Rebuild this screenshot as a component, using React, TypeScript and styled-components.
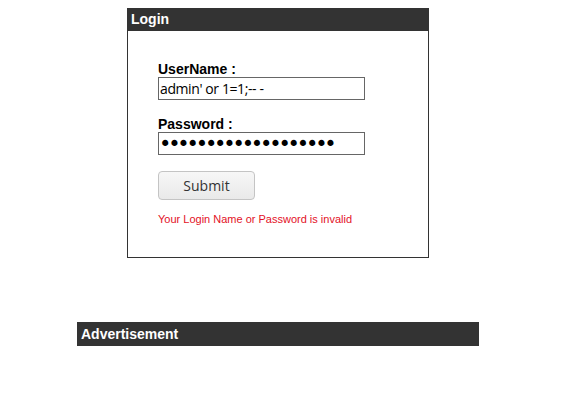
import { FC } from 'react';
import styled, { createGlobalStyle } from 'styled-components';

const GlobalStyle = createGlobalStyle`
  body {
    margin: 0;
    background: #ffffff;
    font-family: 'Liberation Sans', Arial, sans-serif;
  }
`;

const Page = styled.div`
  display: flex;
  flex-direction: column;
  padding-top: 8px;
`;

const Panel = styled.section<{ $left: number; $width: number }>`
  margin-left: ${(p) => p.$left}px;
  width: ${(p) => p.$width}px;
`;

const LoginPanel = styled(Panel)`
  border: 1px solid #333333;
  border-top: none;
`;

const Heading = styled.h2<{ $height: number }>`
  margin: 0;
  height: ${(p) => p.$height}px;
  line-height: ${(p) => p.$height}px;
  background: #333333;
  color: #ffffff;
  font-size: 14px;
  font-weight: bold;
  padding-left: 4px;
`;

const LoginHeading = styled(Heading)`
  margin: 0 -1px;
`;

const Form = styled.form`
  display: flex;
  flex-direction: column;
  align-items: flex-start;
  padding: 30px 30px 31px 30px;
`;

const Field = styled.div`
  display: flex;
  flex-direction: column;
  margin-bottom: 16px;
`;

const Label = styled.label`
  font-size: 14px;
  font-weight: bold;
  color: #000000;
  line-height: 16px;
`;

const TextInput = styled.input`
  box-sizing: border-box;
  width: 207px;
  height: 23px;
  margin: 0;
  padding: 0 1px;
  border: 1px solid #666666;
  border-radius: 0;
  font-family: 'Open Sans', sans-serif;
  font-size: 14px;
  letter-spacing: -0.4px;
  color: #000000;
  outline: none;
`;

const PasswordInput = styled(TextInput)`
  font-family: 'DejaVu Sans', sans-serif;
  font-size: 21px;
  letter-spacing: -3.2px;
  padding: 0 0 0 0;
`;

const SubmitButton = styled.button`
  width: 97px;
  height: 29px;
  margin: 0 0 13px 0;
  border: 1px solid #c4c4c4;
  border-radius: 4px;
  background: linear-gradient(#f7f7f7, #e9e9e9);
  color: #333333;
  font-family: 'Open Sans', sans-serif;
  font-size: 14px;
  padding: 0;
`;

const ErrorText = styled.p`
  margin: 0;
  color: #e3111f;
  font-size: 11px;
  line-height: 13px;
`;

const Spacer = styled.div`
  height: 64px;
`;

const App: FC = () => {
  return (
    <>
      <GlobalStyle />
      <Page>
        <LoginPanel $left={127} $width={300}>
          <LoginHeading $height={23}>Login</LoginHeading>
          <Form onSubmit={(e) => e.preventDefault()}>
            <Field>
              <Label htmlFor='username'>UserName :</Label>
              <TextInput
                id='username'
                type='text'
                defaultValue="admin' or 1=1;-- -"
              />
            </Field>
            <Field>
              <Label htmlFor='password'>Password :</Label>
              <PasswordInput
                id='password'
                type='password'
                defaultValue='aaaaaaaaaaaaaaaaaaa'
              />
            </Field>
            <SubmitButton type='submit'>Submit</SubmitButton>
            <ErrorText>Your Login Name or Password is invalid</ErrorText>
          </Form>
        </LoginPanel>
        <Spacer />
        <Panel $left={77} $width={402}>
          <Heading $height={24}>Advertisement</Heading>
        </Panel>
      </Page>
    </>
  );
};

export default App;
